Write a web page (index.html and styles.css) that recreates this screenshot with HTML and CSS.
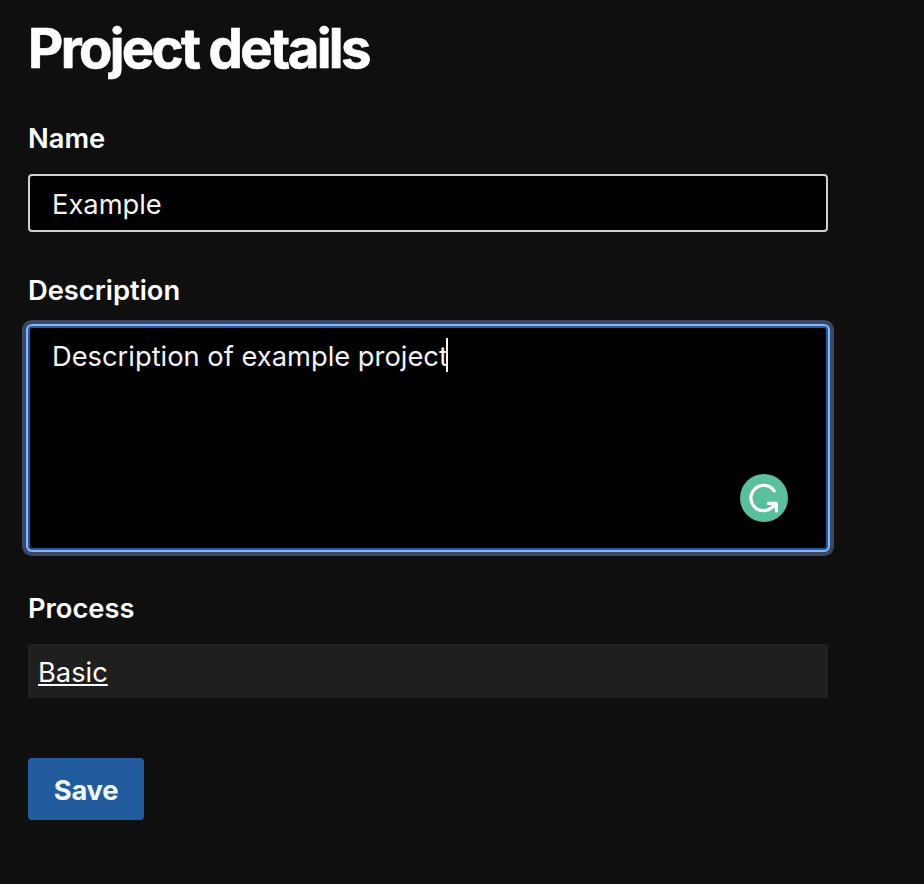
FILE: index.html
```html
<!DOCTYPE html>
<html lang="en">
<head>
<meta charset="utf-8">
<title>Project details</title>
<link rel="stylesheet" href="styles.css">
</head>
<body>
<main class="page">
  <h1 class="title">Project details</h1>
  <section class="field">
    <div class="label">Name</div>
    <div class="input">Example</div>
  </section>
  <section class="field">
    <div class="label">Description</div>
    <div class="textarea"><span>Description of example project</span><span class="caret"></span>
      <svg class="badge" viewBox="0 0 48 48" width="48" height="48"><circle cx="24" cy="24" r="24" fill="#5bbf9e"/><path d="M34.2 16.9A12.7 12.7 0 1 0 24 36.7C29.5 36.7 32.5 33.2 36 30M28.4 29.4H36.4V37" fill="none" stroke="#fff" stroke-width="3.2" stroke-linecap="round" stroke-linejoin="round"/></svg>
    </div>
  </section>
  <section class="field">
    <div class="label">Process</div>
    <div class="process"><a class="link" href="#">Basic</a></div>
  </section>
  <button class="save">Save</button>
</main>
</body>
</html>
```
FILE: styles.css
```css
* { box-sizing: border-box; }
body { margin: 0; min-height: 884px; background: #0f0f0f; color: #fff; font-family: Inter, sans-serif; font-size: 27.3px; }
.page { width: 828px; padding: 18px 0 0 28px; }
.title { margin: 0 0 41px; font-size: 54.5px; line-height: 60px; font-weight: 700; letter-spacing: -2.65px; white-space: nowrap; -webkit-text-stroke: 0.7px #fff; }
.field { margin-bottom: 39px; }
.label { height: 38px; line-height: 40px; margin-bottom: 17px; font-weight: 600; }
.input { height: 58px; padding: 0 22px; border: 2px solid #cfcfcf; border-radius: 4px; background: #000; line-height: 58px; color: #f3f3f3; }
.textarea { position: relative; display: flex; align-items: flex-start; height: 224px; padding: 10px 22px; border: 2px solid #225c9e; border-radius: 4px; box-shadow: 0 0 0 2px #86b6ff, 0 0 0 6px #3a4861; background: #000; color: #f3f3f3; line-height: 38px; }
.caret { width: 2px; height: 34px; margin: 0 0 0 -2px; background: #fff; }
.process { height: 54px; padding-left: 10px; background: #1f1f1f; line-height: 58px; }
.link { color: #fff; text-decoration: underline; text-decoration-thickness: 2px; text-underline-offset: 2px; text-decoration-skip-ink: none; }
.save { display: block; height: 62px; width: 116px; margin-top: 60px; padding: 2px 0 0; border: 0; border-radius: 4px; background: #225c9e; color: #f3f7fc; font: 700 27.3px Inter, sans-serif; letter-spacing: -0.2px; }
.badge { position: absolute; right: 38px; bottom: 26px; }
```
